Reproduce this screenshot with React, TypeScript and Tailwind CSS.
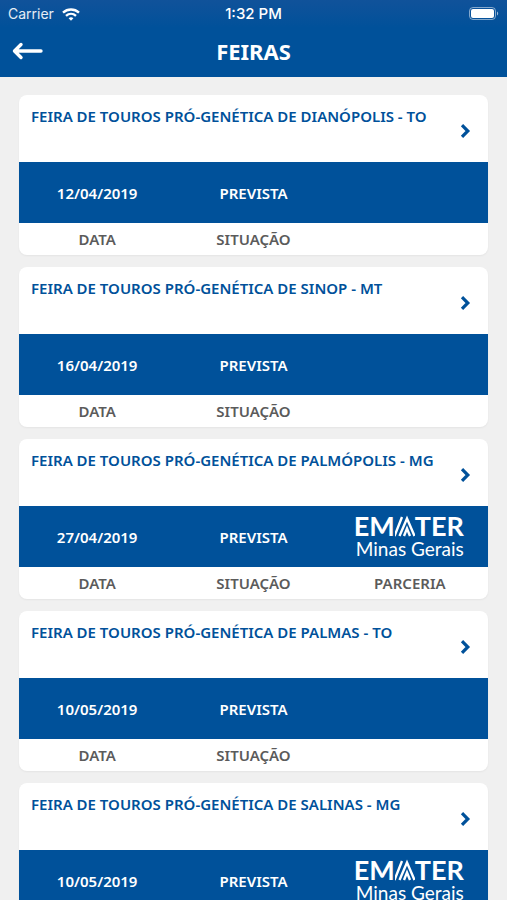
type Feira = {
  name: string;
  date: string;
  status: string;
  partner?: boolean;
};

const feiras: Feira[] = [
  { name: "FEIRA DE TOUROS PRÓ-GENÉTICA DE DIANÓPOLIS - TO", date: "12/04/2019", status: "PREVISTA" },
  { name: "FEIRA DE TOUROS PRÓ-GENÉTICA DE SINOP - MT", date: "16/04/2019", status: "PREVISTA" },
  { name: "FEIRA DE TOUROS PRÓ-GENÉTICA DE PALMÓPOLIS - MG", date: "27/04/2019", status: "PREVISTA", partner: true },
  { name: "FEIRA DE TOUROS PRÓ-GENÉTICA DE PALMAS - TO", date: "10/05/2019", status: "PREVISTA" },
  { name: "FEIRA DE TOUROS PRÓ-GENÉTICA DE SALINAS - MG", date: "10/05/2019", status: "PREVISTA", partner: true },
];

const StatusBar = () => (
  <div className="grid h-7 grid-cols-3 items-center bg-linear-to-b from-[#10529a] to-[#00519a] px-2 font-['Inter',sans-serif] text-white">
    <div className="flex items-center gap-2 text-sm text-white/90">
      <span>Carrier</span>
      <svg viewBox="0 0 18 13" className="h-[13px] w-[18px]" fill="none" stroke="white" strokeWidth="2.4" aria-hidden="true">
        <path d="M1 4.6C5.6 .4 12.4 .4 17 4.6" />
        <path d="M4 7.8c2.9-2.6 7.1-2.6 10 0" />
        <path d="M6.6 10.2c1.4-1.2 3.4-1.2 4.8 0L9 12.8z" fill="white" stroke="none" />
      </svg>
    </div>
    <span className="text-center text-[15px] font-medium">1:32 PM</span>
    <svg viewBox="0 0 32 14" className="h-[14px] w-8 justify-self-end" aria-hidden="true">
      <rect x="2.5" y=".5" width="26" height="12" rx="3.5" fill="none" stroke="white" strokeOpacity=".5" />
      <rect x="4" y="2" width="23" height="9" rx="2" fill="white" />
      <path d="M30 4.500v4c1.600-.7 1.600-3.300 0-4z" fill="white" fillOpacity=".6" />
    </svg>
  </div>
);

const EmaterLogo = () => (
  <div className="flex w-28 flex-col font-['Lato',sans-serif] text-white">
    <div className="flex text-[27px] leading-6 font-bold">
      <span>EM</span>
      <svg viewBox="0 0 20 24" className="h-6 w-5" fill="none" stroke="white" strokeWidth="2.4" aria-hidden="true">
        <path d="M-.5 22 7 3M4.500 22 12 4.500 19.500 22M9 22l3-7.500 3 7.500" />
      </svg>
      <span>TER</span>
    </div>
    <span className="text-[19px] leading-[22px] font-normal">Minas Gerais</span>
  </div>
);

const FeiraCard = ({ feira }: { feira: Feira }) => (
  <article className="shrink-0 overflow-hidden rounded-lg bg-white text-center text-[15px] leading-[18px] font-semibold shadow-xs">
    <a href="#detalhes" className="flex h-[67px] justify-between px-3 text-left text-[#00519a]">
      <h2 className="pt-3">{feira.name}</h2>
      <svg
        viewBox="0 0 12 16"
        className="mt-7 mr-1 h-4 w-3 shrink-0"
        fill="none"
        stroke="currentColor"
        strokeWidth="3.2"
        aria-hidden="true"
      >
        <path d="M2 2.200 7.800 8 2 13.800" />
      </svg>
    </a>
    <div className="grid h-[61px] grid-cols-3 items-center justify-items-center bg-[#00519a] text-white">
      <span>{feira.date}</span>
      <span>{feira.status}</span>
      {feira.partner && <EmaterLogo />}
    </div>
    <div className="grid h-8 grid-cols-3 items-center text-[#5b5b5b]">
      <span>DATA</span>
      <span>SITUAÇÃO</span>
      {feira.partner && <span>PARCERIA</span>}
    </div>
  </article>
);

const App = () => {
  return (
    <div className="flex h-screen flex-col overflow-hidden bg-[#f0f0f0] font-['Noto_Sans',sans-serif]">
      <header className="shrink-0 bg-[#00519a] text-white">
        <StatusBar />
        <div className="grid h-[49px] grid-cols-3 items-center px-3 pb-1">
          <button type="button" aria-label="Voltar" className="justify-self-start">
            <svg
              viewBox="0 0 32 20"
              className="h-5 w-8"
              fill="none"
              stroke="white"
              strokeWidth="3.4"
              strokeLinecap="round"
              strokeLinejoin="round"
            >
              <path d="M9 3.500 2.500 10 9 16.500M3 10h26" />
            </svg>
          </button>
          <h1 className="text-center text-[22px] leading-7 font-bold">FEIRAS</h1>
        </div>
      </header>

      <main className="flex flex-1 flex-col gap-3 overflow-y-auto px-[19px] py-[18px] [scrollbar-width:none]">
        {feiras.map((feira) => (
          <FeiraCard key={feira.name} feira={feira} />
        ))}
      </main>
    </div>
  );
};

export default App;
